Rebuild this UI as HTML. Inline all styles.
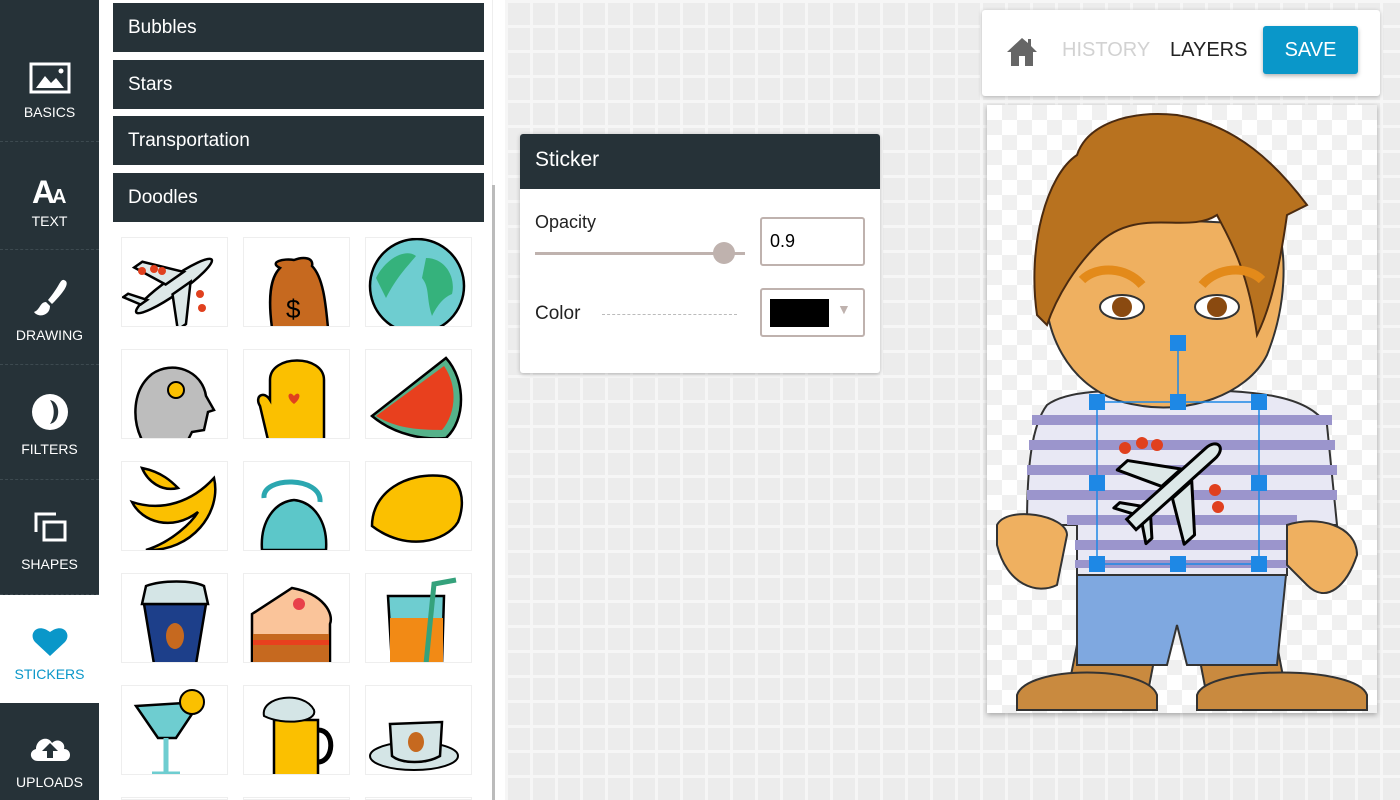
<!DOCTYPE html>
<html><head><meta charset="utf-8"><style>
*{margin:0;padding:0;box-sizing:border-box}
html,body{width:1400px;height:800px;overflow:hidden}
body{font-family:"Liberation Sans",sans-serif;background:#ebebeb}
#w{position:relative;width:1400px;height:800px;overflow:hidden}
.side{position:absolute;left:0;top:0;width:99px;height:800px;background:#263238}
.nav{position:absolute;left:0;width:99px;color:#fff;font-size:14px;text-align:center;border-bottom:1px dashed #3d4a50}
.nav span{position:absolute;left:0;right:0}
.nav svg{position:absolute;left:50%;transform:translateX(-50%)}
.panel{position:absolute;left:99px;top:0;width:406px;height:800px;background:#fff;overflow:hidden}
.hd{position:absolute;left:14px;width:371px;height:49px;background:#263238;color:#fff;font-size:19px;line-height:49px;padding-left:15px}
.tile{position:absolute;width:107px;height:90px;border:1px solid #eee;background:#fff;overflow:hidden}
.bg{position:absolute;left:505px;top:0;width:895px;height:800px;background-color:#ececec;background-image:linear-gradient(#f6f6f6 3px,transparent 3px),linear-gradient(90deg,#f6f6f6 3px,transparent 3px);background-size:25px 25px}
.card{position:absolute;background:#fff;border-radius:3px;box-shadow:0 1px 4px rgba(0,0,0,.25)}
</style></head><body><div id="w">
<div class="bg"></div>
<div class="side">
 <div class="nav" style="top:0;height:142px"><svg style="top:62px" width="42" height="32" viewBox="0 0 42 32"><rect x="2" y="2" width="38" height="28" fill="none" stroke="#fff" stroke-width="3"/><path d="M7 26 L16 14 L22 21 L27 16 L35 26Z" fill="#fff"/><circle cx="32" cy="9" r="2.5" fill="#fff"/></svg><span style="top:104px">BASICS</span></div>
 <div class="nav" style="top:142px;height:108px"><svg style="top:33px" width="40" height="30"><text x="2" y="28" font-size="32" font-weight="bold" fill="#fff" font-family="Liberation Sans">A</text><text x="22" y="28" font-size="20" font-weight="bold" fill="#fff" font-family="Liberation Sans">A</text></svg><span style="top:71px">TEXT</span></div>
 <div class="nav" style="top:250px;height:115px"><svg style="top:26px" width="44" height="44" viewBox="0 0 44 44"><path d="M36 4 C42 6 38 14 24 28 L20 24 C32 10 32 3 36 4Z" fill="#fff"/><path d="M18 26 C12 26 12 34 6 36 C10 42 22 40 22 30Z" fill="#fff"/></svg><span style="top:77px">DRAWING</span></div>
 <div class="nav" style="top:365px;height:115px"><svg style="top:28px" width="38" height="38"><circle cx="19" cy="19" r="18" fill="#fff"/><path d="M19 7 C30 9 30 29 19 31 C24 24 24 14 19 7Z" fill="#263238"/></svg><span style="top:76px">FILTERS</span></div>
 <div class="nav" style="top:480px;height:115px"><svg style="top:30px" width="36" height="32"><path d="M4 22 V4 H24" fill="none" stroke="#fff" stroke-width="3"/><rect x="12" y="12" width="21" height="18" fill="none" stroke="#fff" stroke-width="3"/></svg><span style="top:76px">SHAPES</span></div>
 <div class="nav" style="top:595px;height:108px;background:#fff;color:#0a97c9;border:0"><svg style="top:30px" width="38" height="32" viewBox="0 0 38 32"><path d="M19 31 L4 17 C-3 9 6 -3 19 7 C32 -3 41 9 34 17Z" fill="#0a97c9"/></svg><span style="top:71px">STICKERS</span></div>
 <div class="nav" style="top:703px;height:97px;border:0"><svg style="top:28px" width="44" height="32" viewBox="0 0 44 32"><path d="M10 30 C2 30 0 20 8 18 C8 8 20 4 24 12 C30 6 38 12 36 18 C44 18 44 30 36 30Z" fill="#fff"/><path d="M22 12 L14 20 H19 V27 H25 V20 H30Z" fill="#263238"/></svg><span style="top:71px">UPLOADS</span></div>
</div>
<div class="panel">
 <div class="hd" style="top:3px">Bubbles</div>
 <div class="hd" style="top:60px">Stars</div>
 <div class="hd" style="top:116px">Transportation</div>
 <div class="hd" style="top:173px">Doodles</div>
 <div style="position:absolute;left:393px;top:0;width:1px;height:800px;background:#eee"></div>
 <div style="position:absolute;left:393px;top:185px;width:3px;height:615px;background:#bbb"></div>
<div class="tile" style="left:22px;top:237px"><svg width="107" height="90"><g transform="translate(52,48) rotate(-35)"><ellipse cx="0" cy="0" rx="46" ry="8" fill="#dde8e8" stroke="#000" stroke-width="2.5"/><path d="M-6 -6 L-22 -38 L-12 -38 L16 -6Z M-6 6 L-22 38 L-12 38 L16 6Z M-38 -4 L-48 -20 L-42 -20 L-30 -4Z" fill="#dde8e8" stroke="#000" stroke-width="2.5"/></g><circle cx="20" cy="33" r="4" fill="#e0401e"/><circle cx="32" cy="31" r="4" fill="#e0401e"/><circle cx="40" cy="33" r="4" fill="#e0401e"/><circle cx="78" cy="56" r="4" fill="#e0401e"/><circle cx="80" cy="70" r="4" fill="#e0401e"/></svg></div>
<div class="tile" style="left:144px;top:237px"><svg width="107" height="90"><path d="M28 90 C24 60 26 40 36 30 C24 24 40 20 50 22 C60 18 70 20 68 28 C80 40 82 70 84 90Z" fill="#c6691f" stroke="#000" stroke-width="2.5"/><text x="42" y="80" font-size="26" fill="#000">$</text></svg></div>
<div class="tile" style="left:266px;top:237px"><svg width="107" height="90"><circle cx="51" cy="48" r="47" fill="#6ecdd0" stroke="#000" stroke-width="2.5"/><path d="M10 40 C20 20 40 10 50 18 C40 30 30 40 20 60Z M60 20 C80 20 90 40 86 56 C76 60 70 70 66 78 C60 60 64 50 56 40Z" fill="#35b27c"/></svg></div>
<div class="tile" style="left:22px;top:349px"><svg width="107" height="90"><path d="M20 90 C10 70 10 40 30 24 C50 10 80 20 84 46 L92 60 L86 62 L82 80 L70 82 L66 90Z" fill="#bdbdbd" stroke="#000" stroke-width="2.5"/><circle cx="54" cy="40" r="8" fill="#fbc000" stroke="#000" stroke-width="2"/></svg></div>
<div class="tile" style="left:144px;top:349px"><svg width="107" height="90"><path d="M16 56 C10 46 20 40 26 50 L26 30 C26 4 80 4 80 30 L80 90 L24 90Z" fill="#fbc000" stroke="#000" stroke-width="2.5"/><path d="M50 46 C46 40 40 46 50 54 C60 46 54 40 50 46Z" fill="#e0401e"/></svg></div>
<div class="tile" style="left:266px;top:349px"><svg width="107" height="90"><path d="M6 66 L80 8 C100 30 100 70 80 88 C60 90 30 86 6 66Z" fill="#55b28a" stroke="#000" stroke-width="2.5"/><path d="M10 66 L78 16 C92 36 90 64 76 80 C50 80 30 78 10 66Z" fill="#e8401e"/></svg></div>
<div class="tile" style="left:22px;top:461px"><svg width="107" height="90"><path d="M10 40 C40 50 70 40 92 16 C100 50 70 90 24 88 C50 80 70 60 76 50 C50 70 20 60 10 40Z" fill="#fbc000" stroke="#000" stroke-width="2.5"/><path d="M20 6 C40 10 50 20 56 26 C40 30 26 20 20 6Z" fill="#fbc000" stroke="#000" stroke-width="2.5"/></svg></div>
<div class="tile" style="left:144px;top:461px"><svg width="107" height="90"><path d="M18 88 C16 60 30 40 50 38 C70 40 84 60 82 88Z" fill="#5cc7c9" stroke="#000" stroke-width="2.5"/><path d="M20 36 C18 14 78 14 76 40" fill="none" stroke="#2ba7b0" stroke-width="5"/></svg></div>
<div class="tile" style="left:266px;top:461px"><svg width="107" height="90"><path d="M6 64 C6 30 40 10 76 14 C96 16 100 40 92 60 C80 80 40 90 6 64Z" fill="#fbc000" stroke="#000" stroke-width="2.5"/></svg></div>
<div class="tile" style="left:22px;top:573px"><svg width="107" height="90"><path d="M22 30 L84 30 L74 90 L32 90Z" fill="#1d3f8a" stroke="#000" stroke-width="2.5"/><path d="M24 12 C40 6 70 6 82 12 L86 30 L20 30Z" fill="#d4e5e6" stroke="#000" stroke-width="2.5"/><ellipse cx="53" cy="62" rx="9" ry="13" fill="#c6691f"/></svg></div>
<div class="tile" style="left:144px;top:573px"><svg width="107" height="90"><path d="M8 40 L48 14 C80 20 90 40 86 50 L86 90 L8 90Z" fill="#fac49a" stroke="#000" stroke-width="2.5"/><rect x="9" y="60" width="76" height="30" fill="#c6691f"/><rect x="9" y="66" width="76" height="5" fill="#e8401e"/><circle cx="55" cy="30" r="6" fill="#e8404a"/></svg></div>
<div class="tile" style="left:266px;top:573px"><svg width="107" height="90"><path d="M22 22 L78 22 L76 90 L26 90Z" fill="#6ecdd0" stroke="#000" stroke-width="2.5"/><rect x="24" y="44" width="53" height="46" fill="#f28a15"/><path d="M60 90 L68 10 L90 6" fill="none" stroke="#35a27c" stroke-width="5"/></svg></div>
<div class="tile" style="left:22px;top:685px"><svg width="107" height="90"><path d="M14 20 L78 16 L54 52 L36 52Z" fill="#6ecdd0" stroke="#000" stroke-width="2.5"/><path d="M44 52 L44 86 M30 88 L58 88" stroke="#6ecdd0" stroke-width="5"/><circle cx="70" cy="16" r="12" fill="#fbc000" stroke="#000" stroke-width="2"/></svg></div>
<div class="tile" style="left:144px;top:685px"><svg width="107" height="90"><rect x="30" y="34" width="44" height="56" fill="#fbc000" stroke="#000" stroke-width="2.5"/><path d="M20 30 C16 10 60 4 70 24 C74 36 40 40 20 30Z" fill="#d4e5e6" stroke="#000" stroke-width="2"/><path d="M74 44 C92 44 90 76 74 76" fill="none" stroke="#000" stroke-width="5"/></svg></div>
<div class="tile" style="left:266px;top:685px"><svg width="107" height="90"><ellipse cx="48" cy="70" rx="44" ry="14" fill="#d4e5e6" stroke="#000" stroke-width="2"/><path d="M24 38 L76 36 L74 70 C60 78 36 78 26 70Z" fill="#d4e5e6" stroke="#000" stroke-width="2.5"/><ellipse cx="50" cy="56" rx="8" ry="10" fill="#c6691f"/></svg></div>
<div class="tile" style="left:22px;top:797px;height:3px"></div><div class="tile" style="left:144px;top:797px;height:3px"></div><div class="tile" style="left:266px;top:797px;height:3px"></div>
</div>

<div class="card" style="left:520px;top:134px;width:360px;height:239px;overflow:hidden">
 <div style="height:55px;background:#263238;color:#fff;font-size:21px;line-height:52px;padding-left:15px">Sticker</div>
 <div style="position:absolute;left:15px;top:78px;font-size:18px;color:#222">Opacity</div>
 <div style="position:absolute;left:15px;top:118px;width:210px;height:3px;background:#bfb2ae"></div>
 <div style="position:absolute;left:193px;top:108px;width:22px;height:22px;border-radius:50%;background:#bfb2ae"></div>
 <div style="position:absolute;left:240px;top:83px;width:105px;height:49px;border:2px solid #bfb2ae;border-radius:3px;font-size:18px;line-height:45px;padding-left:8px">0.9</div>
 <div style="position:absolute;left:15px;top:169px;font-size:19px;color:#222">Color</div>
 <div style="position:absolute;left:82px;top:180px;width:135px;border-top:1px dashed #bbb"></div>
 <div style="position:absolute;left:240px;top:154px;width:105px;height:49px;border:2px solid #bfb2ae;border-radius:3px"><div style="position:absolute;left:8px;top:9px;width:59px;height:28px;background:#000"></div><div style="position:absolute;left:75px;top:11px;color:#bfb2ae;font-size:14px">▼</div></div>
</div>

<div class="card" style="left:982px;top:10px;width:398px;height:86px">
 <svg style="position:absolute;left:23px;top:26px" width="34" height="30" viewBox="0 0 34 30"><path d="M17 2 L2 16 H6 V30 H14 V20 H20 V30 H28 V16 H32 L26 10 V3 H23 V7Z" fill="#666"/></svg>
 <div style="position:absolute;left:80px;top:29px;font-size:20px;color:#d2d2d2">HISTORY</div>
 <div style="position:absolute;left:188px;top:29px;font-size:20px;color:#222">LAYERS</div>
 <div style="position:absolute;left:281px;top:16px;width:95px;height:48px;background:#0a97c9;border-radius:3px;color:#fff;font-size:20px;line-height:48px;text-align:center;box-shadow:0 2px 4px rgba(0,0,0,.3)">SAVE</div>
</div>

<div style="position:absolute;left:987px;top:105px;width:390px;height:608px;overflow:hidden;background-color:#fff;background-image:linear-gradient(45deg,#f0f0f0 25%,transparent 25%,transparent 75%,#f0f0f0 75%),linear-gradient(45deg,#f0f0f0 25%,transparent 25%,transparent 75%,#f0f0f0 75%);background-size:30px 30px;background-position:0 0,15px 15px;box-shadow:0 2px 5px rgba(0,0,0,.3)">
<svg width="390" height="608" viewBox="0 0 390 608">
 <path d="M90 540 L80 590 L160 592 L170 540Z M210 540 L220 592 L300 592 L290 540Z" fill="#c98a3f" stroke="#333" stroke-width="2"/>
 <path d="M30 590 C40 560 160 560 170 590 L170 605 L30 605Z M210 590 C220 560 370 560 380 590 L380 605 L210 605Z" fill="#c98a3f" stroke="#333" stroke-width="2"/>
 <path d="M90 460 L300 460 L290 560 L200 560 L190 520 L180 560 L90 560Z" fill="#7fa8e0" stroke="#333" stroke-width="2"/>
 <path d="M60 300 C80 285 120 285 190 285 C270 285 320 290 340 320 L350 420 L300 420 L300 470 L90 470 L90 420 L40 420 C40 360 45 320 60 300Z" fill="#e8e8f4" stroke="#333" stroke-width="2"/>
 <g fill="#9b95cc"><rect x="45" y="310" width="300" height="10"/><rect x="42" y="335" width="306" height="10"/><rect x="40" y="360" width="310" height="10"/><rect x="40" y="385" width="310" height="10"/><rect x="80" y="410" width="230" height="10"/><rect x="88" y="435" width="214" height="10"/><rect x="88" y="455" width="214" height="8"/></g>
 <path d="M10 420 C20 400 80 410 80 430 L70 480 C50 490 20 480 10 440Z" fill="#efb060" stroke="#333" stroke-width="2"/>
 <path d="M300 420 C330 410 370 420 370 450 C360 480 340 500 320 480 L300 460Z" fill="#efb060" stroke="#333" stroke-width="2"/>
 <path d="M60 160 C50 220 80 290 150 300 C200 310 260 290 280 250 C300 200 300 150 290 120 L80 110Z" fill="#efb060" stroke="#333" stroke-width="2"/>
 <path d="M50 210 C40 140 60 70 90 50 C100 20 140 5 190 10 C250 20 290 60 320 100 L300 110 C290 180 280 210 270 230 C260 160 240 130 230 110 C200 130 150 100 110 140 C90 160 70 190 60 220Z" fill="#b8721f" stroke="#4a2a10" stroke-width="2"/>
 <path d="M95 175 C110 160 140 162 155 180 M215 180 C230 162 260 160 275 175" stroke="#e38a1a" stroke-width="9" fill="none"/>
 <ellipse cx="135" cy="202" rx="22" ry="12" fill="#fff" stroke="#333" stroke-width="2"/><circle cx="135" cy="202" r="10" fill="#8a4a10"/>
 <ellipse cx="230" cy="202" rx="22" ry="12" fill="#fff" stroke="#333" stroke-width="2"/><circle cx="230" cy="202" r="10" fill="#8a4a10"/>
 <g transform="translate(186,382) rotate(-42)"><path d="M-8 -8 L-30 -50 L-16 -50 L18 -8Z M-8 8 L-30 50 L-16 50 L18 8Z M-46 -4 L-58 -24 L-50 -24 L-34 -4Z M-46 4 L-58 24 L-50 24 L-34 4Z" fill="#dde8e8" stroke="#000" stroke-width="3" stroke-linejoin="round"/><path d="M-56 -7 L50 -7 C66 -7 66 7 50 7 L-56 7Z" fill="#dde8e8" stroke="#000" stroke-width="3"/></g>
 <circle cx="138" cy="343" r="6" fill="#e0401e"/><circle cx="155" cy="338" r="6" fill="#e0401e"/><circle cx="170" cy="340" r="6" fill="#e0401e"/><circle cx="228" cy="385" r="6" fill="#e0401e"/><circle cx="231" cy="402" r="6" fill="#e0401e"/>
 <g stroke="#1e88e5" stroke-width="1.5" fill="none"><rect x="110" y="297" width="162" height="162"/><line x1="191" y1="238" x2="191" y2="297"/></g>
 <g fill="#1e88e5"><rect x="183" y="230" width="16" height="16"/><rect x="102" y="289" width="16" height="16"/><rect x="183" y="289" width="16" height="16"/><rect x="264" y="289" width="16" height="16"/><rect x="102" y="370" width="16" height="16"/><rect x="264" y="370" width="16" height="16"/><rect x="102" y="451" width="16" height="16"/><rect x="183" y="451" width="16" height="16"/><rect x="264" y="451" width="16" height="16"/></g>
</svg></div>
</div></body></html>
